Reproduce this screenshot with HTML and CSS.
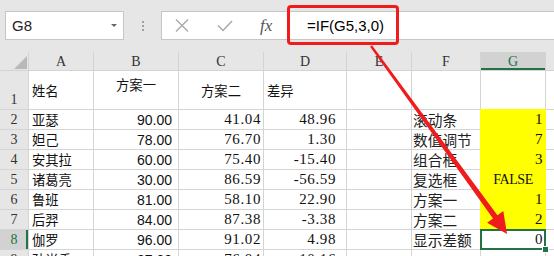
FILE: index.html
```html
<!DOCTYPE html>
<html lang="zh-CN">
<head>
	<meta charset="utf-8">
	<title>IF</title>
	<link rel="stylesheet" href="styles.css">
</head>
<body>
	<div id="toolbar">
		<div class="namebox"><span>G8</span><i class="caret"></i></div>
		<div class="grip"><i></i><i></i><i></i></div>
		<div class="formula">
			<svg class="btn-cancel" width="14" height="13" viewBox="0 0 14 13"><path d="M1 0.5L13 12.5M13 0.5L1 12.5" stroke="#a8a8a8" stroke-width="1.3" fill="none"/></svg>
			<svg class="btn-ok" width="16" height="12" viewBox="0 0 16 12"><path d="M1 5.5L6 10.5L15 1" stroke="#a8a8a8" stroke-width="1.5" fill="none"/></svg>
			<span class="fx">fx</span>
			<span class="expr">=IF(G5,3,0)</span>
		</div>
	</div>
	<div class="sheet">
		<div class="rh corner"><i></i></div>
		<div class="ch">A</div>
		<div class="ch">B</div>
		<div class="ch">C</div>
		<div class="ch">D</div>
		<div class="ch">E</div>
		<div class="ch">F</div>
		<div class="ch sel-col">G</div>
		<div class="ch"></div>

		<div class="rh bottom">1</div>
		<div class="cell cjk">姓名</div>
		<div class="cell cjk top center">方案一</div>
		<div class="cell cjk center">方案二</div>
		<div class="cell cjk">差异</div>
		<div class="cell"></div>
		<div class="cell"></div>
		<div class="cell"></div>
		<div class="cell"></div>

		<div class="rh">2</div>
		<div class="cell cjk">亚瑟</div>
		<div class="cell num">90.00</div>
		<div class="cell song">41.04</div>
		<div class="cell song col-d">48.96</div>
		<div class="cell"></div>
		<div class="cell lbl">滚动条</div>
		<div class="cell song fill">1</div>
		<div class="cell"></div>

		<div class="rh">3</div>
		<div class="cell cjk">妲己</div>
		<div class="cell num">78.00</div>
		<div class="cell song">76.70</div>
		<div class="cell song col-d">1.30</div>
		<div class="cell"></div>
		<div class="cell lbl">数值调节</div>
		<div class="cell song fill">7</div>
		<div class="cell"></div>

		<div class="rh">4</div>
		<div class="cell cjk">安其拉</div>
		<div class="cell num">60.00</div>
		<div class="cell song">75.40</div>
		<div class="cell song col-d">-15.40</div>
		<div class="cell"></div>
		<div class="cell lbl">组合框</div>
		<div class="cell song fill">3</div>
		<div class="cell"></div>

		<div class="rh">5</div>
		<div class="cell cjk">诸葛亮</div>
		<div class="cell num">30.00</div>
		<div class="cell song">86.59</div>
		<div class="cell song col-d">-56.59</div>
		<div class="cell"></div>
		<div class="cell lbl">复选框</div>
		<div class="cell bool fill center">FALSE</div>
		<div class="cell"></div>

		<div class="rh">6</div>
		<div class="cell cjk">鲁班</div>
		<div class="cell num">81.00</div>
		<div class="cell song">58.10</div>
		<div class="cell song col-d">22.90</div>
		<div class="cell"></div>
		<div class="cell lbl">方案一</div>
		<div class="cell song fill">1</div>
		<div class="cell"></div>

		<div class="rh">7</div>
		<div class="cell cjk">后羿</div>
		<div class="cell num">84.00</div>
		<div class="cell song">87.38</div>
		<div class="cell song col-d">-3.38</div>
		<div class="cell"></div>
		<div class="cell lbl">方案二</div>
		<div class="cell song fill">2</div>
		<div class="cell"></div>

		<div class="rh sel-row">8</div>
		<div class="cell cjk">伽罗</div>
		<div class="cell num">96.00</div>
		<div class="cell song">91.02</div>
		<div class="cell song col-d">4.98</div>
		<div class="cell"></div>
		<div class="cell lbl">显示差额</div>
		<div class="cell song active">0</div>
		<div class="cell"></div>

		<div class="rh">9</div>
		<div class="cell cjk">孙尚香</div>
		<div class="cell num">87.00</div>
		<div class="cell song">76.84</div>
		<div class="cell song col-d">10.16</div>
		<div class="cell"></div>
		<div class="cell"></div>
		<div class="cell"></div>
		<div class="cell"></div>
	</div>

	<!-- annotation: red box + arrow -->
	<div class="mark-box"></div>
	<svg class="mark-arrow" width="554" height="256" viewBox="0 0 554 256">
		<polygon fill="#f01c1c" points="372,45.3 497.4,215.3 503.3,211 507,234 487.1,222.7 493,218.4 370.1,46.7"/>
	</svg>
</body>
</html>
```

FILE: styles.css
```css
body {
	width: 554px;
	height: 256px;
	margin: 0;
	overflow: hidden;
	position: relative;
	background: #e6e6e6;
	font-family: "Liberation Sans", "Noto Sans CJK SC", sans-serif;
	color: #111;
}

/* formula bar */
#toolbar {
	display: flex;
	align-items: flex-start;
	height: 52px;
	box-sizing: border-box;
	padding: 11px 0 0 5px;
}
.namebox {
	display: flex;
	align-items: center;
	width: 119px;
	height: 29px;
	box-sizing: border-box;
	padding-left: 6px;
	background: white;
	border: 1px solid #c6c6c6;
	font-size: 15px;
	color: #222;
}
.caret {
	margin-left: auto;
	margin-right: 6px;
	border-left: 3px solid transparent;
	border-right: 3px solid transparent;
	border-top: 3px solid #666;
}
.grip {
	width: 37px;
	height: 29px;
	display: flex;
	flex-direction: column;
	align-items: center;
	justify-content: center;
	gap: 2px;
}
.grip i {
	width: 2px;
	height: 2px;
	background: #a0a0a0;
}
.formula {
	flex: 1;
	display: flex;
	align-items: center;
	height: 29px;
	box-sizing: border-box;
	background: white;
	border: 1px solid #c6c6c6;
	border-right: none;
}
.btn-cancel {
	margin-left: 13px;
}
.btn-ok {
	margin-left: 28px;
}
.fx {
	display: inline-block;
	width: 18px;
	margin-left: 27px;
	font-family: "Liberation Serif", serif;
	font-style: italic;
	font-size: 17px;
	color: #555;
}
.expr {
	margin-left: 29px;
	font-size: 15px;
	color: #000;
}

/* grid */
.sheet {
	display: grid;
	grid-template-columns: 28px 64px 84px 84px 82px 64px 68px 64px 1fr;
	grid-template-rows: 18px 38px repeat(8, 19px);
	gap: 1px;
	background: #d4d4d4;
}
.ch,
.rh {
	display: flex;
	align-items: center;
	justify-content: center;
	background: #e6e6e6;
	font-family: "Liberation Serif", serif;
	font-size: 14px;
	color: #333;
}
.ch {
	padding-top: 1px;
}
.rh.bottom {
	align-items: flex-end;
	padding-bottom: 1px;
}
.corner {
	justify-content: flex-end;
	align-items: flex-end;
	padding: 0 1px 1px 0;
}
.corner i {
	width: 13px;
	height: 13px;
	background: #b9b9b9;
	clip-path: polygon(100% 0, 100% 100%, 0 100%);
}
.sel-col {
	background: #d2d2d2;
	color: #217346;
	box-shadow: inset 0 -2px 0 #217346;
}
.sel-row {
	background: #d2d2d2;
	color: #217346;
	box-shadow: inset -2px 0 0 #217346;
}
.cell {
	display: flex;
	align-items: center;
	padding: 0 3px;
	background: white;
	white-space: nowrap;
	overflow: hidden;
}
.cell.top {
	align-items: flex-start;
	padding-top: 4px;
}
.cell.center {
	justify-content: center;
}
.cjk {
	font-family: "Noto Sans CJK SC", sans-serif;
	font-size: 13.3px;
	padding-left: 3px;
}
.lbl {
	font-family: "Noto Sans CJK SC", sans-serif;
	font-size: 14.7px;
	color: #222;
	padding-left: 1px;
}
.num {
	justify-content: flex-end;
	font-size: 14px;
	padding-right: 6px;
}
.song {
	justify-content: flex-end;
	font-family: "Liberation Serif", serif;
	font-size: 15px;
	letter-spacing: 0.6px;
	padding-right: 2px;
}
.col-d {
	padding-right: 10px;
}
.bool {
	font-family: "Liberation Serif", serif;
	font-size: 14px;
	letter-spacing: -0.4px;
}
.fill {
	background: #ffff00;
	box-shadow: 0 0 0 1px #ffff00;
}
.active {
	position: relative;
	outline: 2px solid #217346;
	outline-offset: -1px;
	overflow: visible;
}
.active:after {
	content: "";
	position: absolute;
	right: -4px;
	bottom: -4px;
	width: 5px;
	height: 5px;
	background: #217346;
	border: 1px solid white;
}

/* annotation */
.mark-box {
	position: absolute;
	left: 287px;
	top: 5px;
	width: 112px;
	height: 40px;
	box-sizing: border-box;
	border: 3px solid #f01c1c;
	border-radius: 4px;
}
.mark-arrow {
	position: absolute;
	left: 0;
	top: 0;
	pointer-events: none;
}
```
